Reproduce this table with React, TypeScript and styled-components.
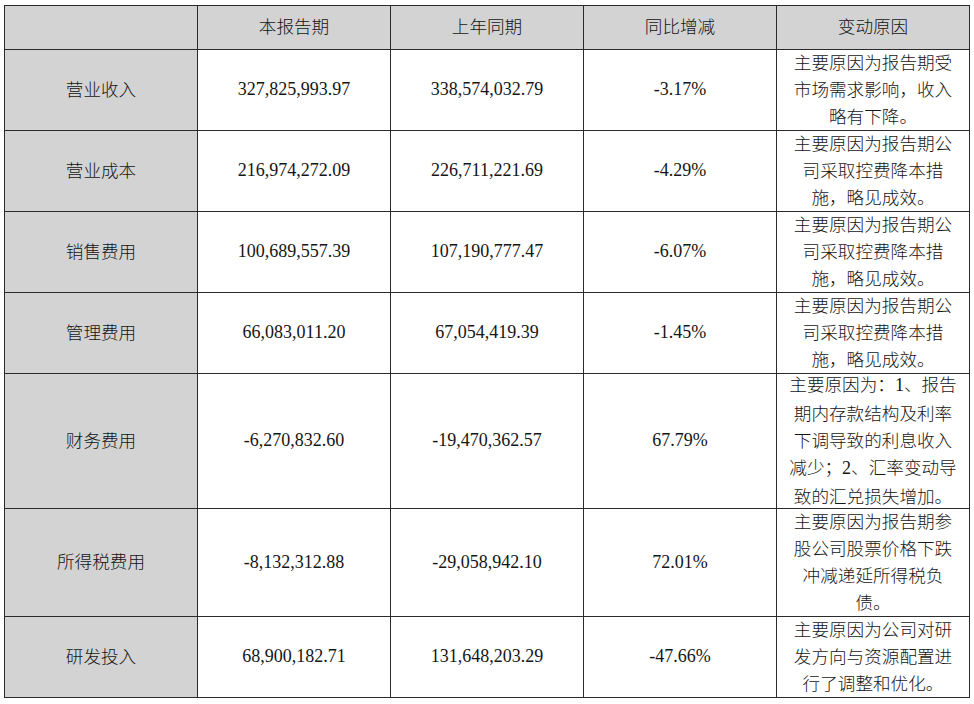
import React from "react";
import styled, { createGlobalStyle } from "styled-components";

const GlobalStyle = createGlobalStyle`
  html, body {
    margin: 0;
    padding: 0;
    background: #ffffff;
  }
`;

const Page = styled.div`
  padding: 5px 0 0 4px;
  background: #ffffff;
`;

const Grid = styled.div`
  display: grid;
  grid-template-columns: repeat(5, 193px);
  grid-template-rows: 44px 81px 81px 81px 81px 135px 108px 81px;
  border-top: 1px solid #2b2b2b;
  border-left: 1px solid #2b2b2b;
  width: max-content;
`;

const Cell = styled.div<{ $gray?: boolean; $num?: boolean }>`
  box-sizing: border-box;
  border-right: 1px solid #2b2b2b;
  border-bottom: 1px solid #2b2b2b;
  background: ${(p) => (p.$gray ? "#d3d3d3" : "#ffffff")};
  display: flex;
  align-items: center;
  justify-content: center;
  text-align: center;
  color: #151515;
  padding-bottom: ${(p) => (p.$num ? "1px" : "4px")};
  font-family: ${(p) =>
    p.$num
      ? `"Liberation Serif", "Noto Sans CJK SC", serif`
      : `"Noto Sans CJK SC", "Liberation Serif", sans-serif`};
  font-size: ${(p) => (p.$num ? "18px" : "17.6px")};
  font-weight: 300;
  line-height: 27px;
`;

const Reason = styled.div`
  display: flex;
  flex-direction: column;
  align-items: center;
`;

const Line = styled.span`
  display: block;
  white-space: nowrap;
  line-height: 27px;
`;

const Digit = styled.span`
  font-family: "Liberation Serif", serif;
  font-size: 18px;
`;

type Row = {
  label: string;
  cur: string;
  prev: string;
  pct: string;
  reason: React.ReactNode[];
};

const rows: Row[] = [
  {
    label: "营业收入",
    cur: "327,825,993.97",
    prev: "338,574,032.79",
    pct: "-3.17%",
    reason: ["主要原因为报告期受", "市场需求影响，收入", "略有下降。"],
  },
  {
    label: "营业成本",
    cur: "216,974,272.09",
    prev: "226,711,221.69",
    pct: "-4.29%",
    reason: ["主要原因为报告期公", "司采取控费降本措", "施，略见成效。"],
  },
  {
    label: "销售费用",
    cur: "100,689,557.39",
    prev: "107,190,777.47",
    pct: "-6.07%",
    reason: ["主要原因为报告期公", "司采取控费降本措", "施，略见成效。"],
  },
  {
    label: "管理费用",
    cur: "66,083,011.20",
    prev: "67,054,419.39",
    pct: "-1.45%",
    reason: ["主要原因为报告期公", "司采取控费降本措", "施，略见成效。"],
  },
  {
    label: "财务费用",
    cur: "-6,270,832.60",
    prev: "-19,470,362.57",
    pct: "67.79%",
    reason: [
      <>
        主要原因为：<Digit>1</Digit>、报告
      </>,
      "期内存款结构及利率",
      "下调导致的利息收入",
      <>
        减少；<Digit>2</Digit>、汇率变动导
      </>,
      "致的汇兑损失增加。",
    ],
  },
  {
    label: "所得税费用",
    cur: "-8,132,312.88",
    prev: "-29,058,942.10",
    pct: "72.01%",
    reason: ["主要原因为报告期参", "股公司股票价格下跌", "冲减递延所得税负", "债。"],
  },
  {
    label: "研发投入",
    cur: "68,900,182.71",
    prev: "131,648,203.29",
    pct: "-47.66%",
    reason: ["主要原因为公司对研", "发方向与资源配置进", "行了调整和优化。"],
  },
];

const headers = ["本报告期", "上年同期", "同比增减", "变动原因"];

export default function App() {
  return (
    <>
      <GlobalStyle />
      <Page>
        <Grid>
          <Cell $gray />
          {headers.map((h) => (
            <Cell key={h} $gray>
              {h}
            </Cell>
          ))}
          {rows.map((r) => (
            <React.Fragment key={r.label}>
              <Cell $gray>{r.label}</Cell>
              <Cell $num>{r.cur}</Cell>
              <Cell $num>{r.prev}</Cell>
              <Cell $num>{r.pct}</Cell>
              <Cell>
                <Reason>
                  {r.reason.map((l, i) => (
                    <Line key={i}>{l}</Line>
                  ))}
                </Reason>
              </Cell>
            </React.Fragment>
          ))}
        </Grid>
      </Page>
    </>
  );
}
